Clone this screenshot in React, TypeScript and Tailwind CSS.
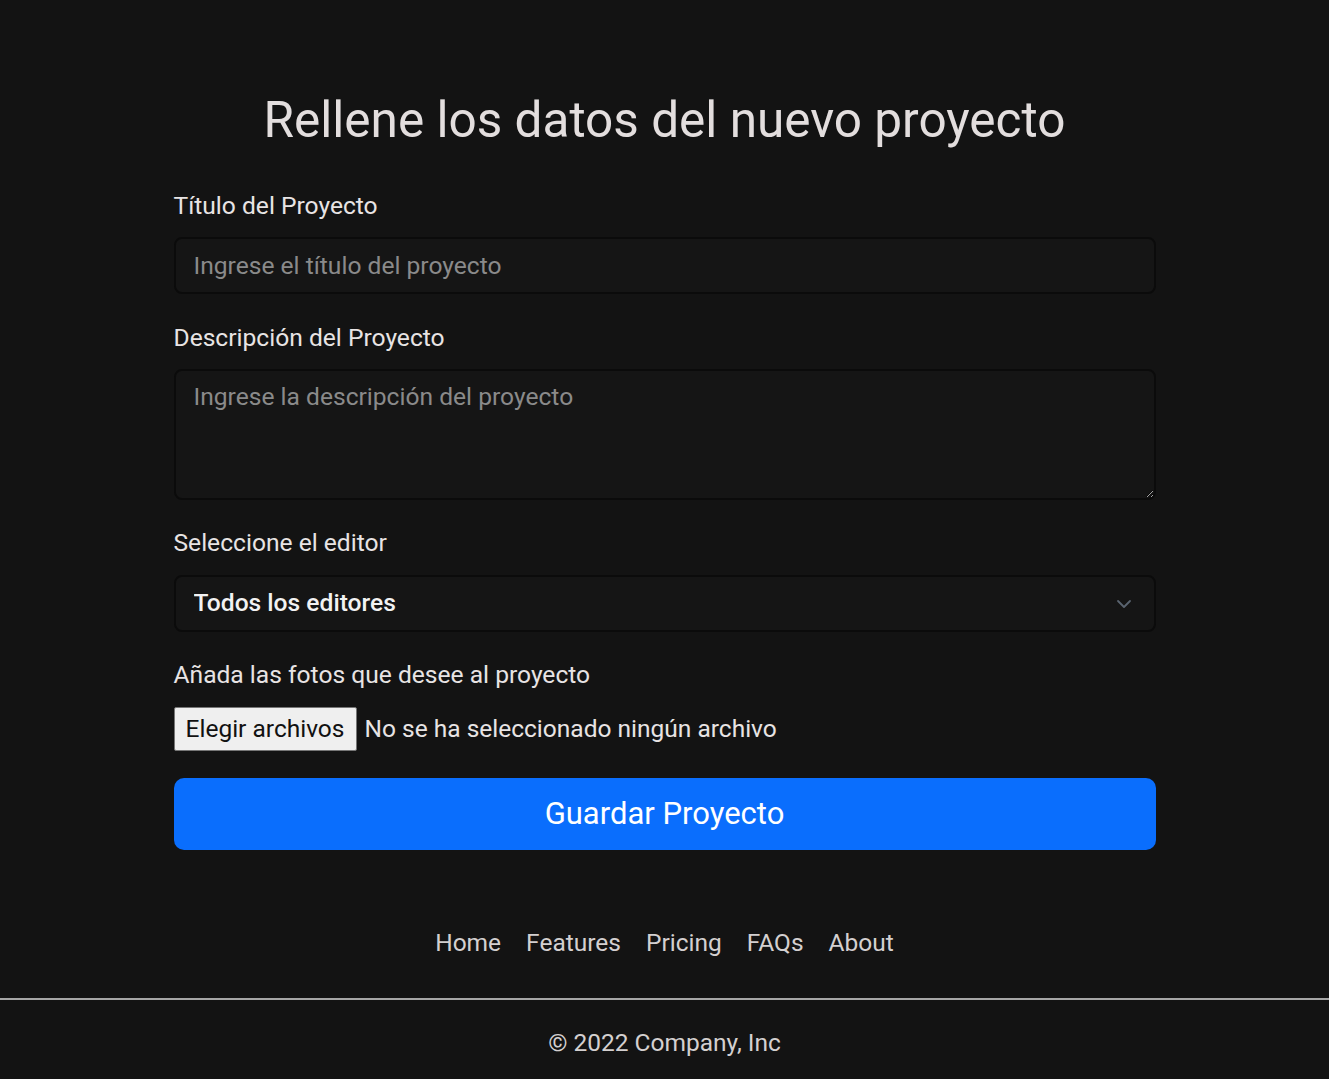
import React from "react";

export default function App() {
  return (
    <div className="min-h-screen bg-[#131313] text-[#dedede] flex flex-col" style={{ fontFamily: "Roboto, 'Noto Sans', sans-serif" }}>
      <main className="w-[982px] mx-auto pt-[90px]">
        <h1 className="text-center text-[49.5px] leading-[60px] font-normal text-[#e3dede]">Rellene los datos del nuevo proyecto</h1>

        <div className="mt-[38px]">
          <label className="block text-[24.6px] leading-[36px] text-[#e8e4e4]">Título del Proyecto</label>
          <input
            type="text"
            placeholder="Ingrese el título del proyecto"
            className="block mt-[13px] w-full h-[57px] rounded-[8px] border-2 border-[#0b0b0b] bg-[#151515] px-[18px] text-[24.6px] text-[#e8e4e4] placeholder:text-[#8a8a8a] outline-none"
          />
        </div>

        <div className="mt-[26px]">
          <label className="block text-[24.6px] leading-[36px] text-[#e8e4e4]">Descripción del Proyecto</label>
          <textarea
            placeholder="Ingrese la descripción del proyecto"
            className="mt-[13px] block w-full h-[131px] rounded-[8px] border-2 border-[#0b0b0b] bg-[#151515] px-[18px] py-[8px] text-[24.6px] leading-[36px] text-[#e8e4e4] placeholder:text-[#8a8a8a] outline-none resize-y"
          />
        </div>

        <div className="mt-[25px]">
          <label className="block text-[24.6px] leading-[36px] text-[#e8e4e4]">Seleccione el editor</label>
          <div className="relative mt-[14px]">
            <select
              className="block w-full h-[57px] appearance-none rounded-[8px] border-2 border-[#0b0b0b] bg-[#151515] px-[18px] text-[24.6px] font-medium text-[#f2f2f2] outline-none"
              defaultValue="all"
            >
              <option value="all">Todos los editores</option>
            </select>
            <svg className="pointer-events-none absolute right-[24px] top-[23px]" width="16" height="11" viewBox="0 0 16 11" fill="none">
              <path d="M2 3 L8 9 L14 3" stroke="#5a6470" strokeWidth="1.8" strokeLinecap="round" strokeLinejoin="round" />
            </svg>
          </div>
        </div>

        <div className="mt-[25px]">
          <label className="block text-[24.6px] leading-[36px] text-[#e8e4e4]">Añada las fotos que desee al proyecto</label>
          <div className="mt-[14px] flex items-center">
            <div className="h-[44px] w-[183px] flex items-center justify-center bg-[#efefef] border border-[#767676] rounded-[2px] text-[24.5px] text-[#111]">Elegir archivos</div>
            <span className="ml-[8px] text-[24.5px] text-[#e8e4e4]">No se ha seleccionado ningún archivo</span>
          </div>
        </div>

        <button className="block mt-[27px] w-full h-[72px] rounded-[10px] bg-[#0a6efd] text-white text-[31px] font-normal">
          Guardar Proyecto
        </button>
      </main>

      <footer className="mt-[75px]">
        <nav className="flex justify-center gap-[25px] text-[24.5px] leading-[36px] text-[#d4d0d0] pb-[37px]">
          <a>Home</a>
          <a>Features</a>
          <a>Pricing</a>
          <a>FAQs</a>
          <a>About</a>
        </nav>
        <div className="border-t-2 border-[#a6a6a6] pt-[25px] pb-[19px] text-center text-[24.5px] leading-[36px] text-[#d4d0d0]">
          © 2022 Company, Inc
        </div>
      </footer>
    </div>
  );
}
